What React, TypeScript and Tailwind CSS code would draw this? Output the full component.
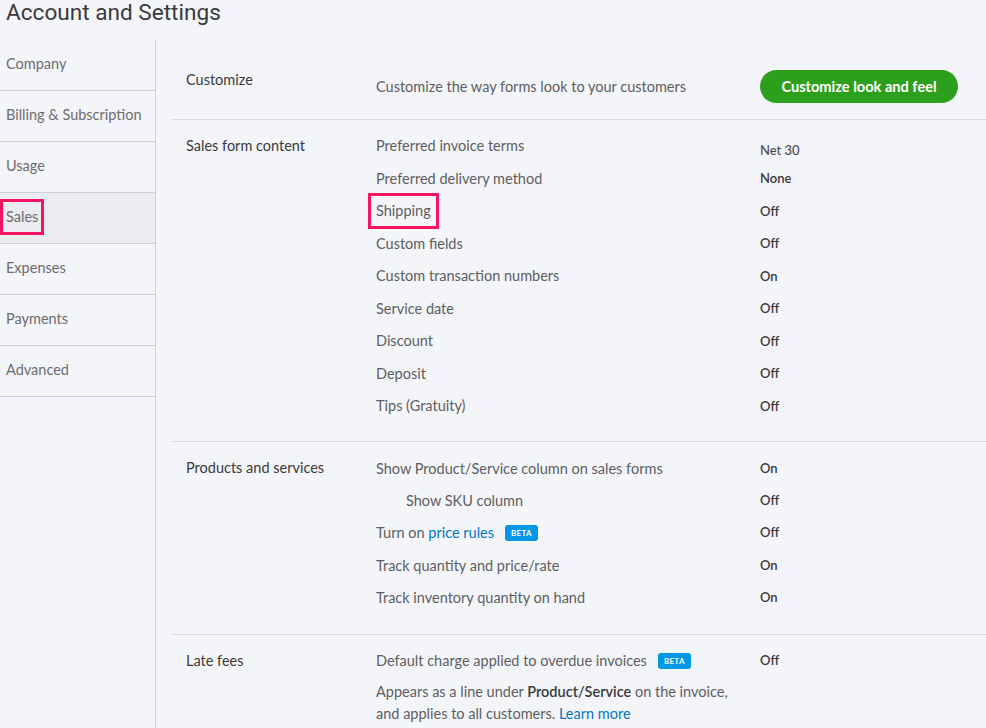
import React from "react";

const navItems = ["Company", "Billing & Subscription", "Usage", "Sales", "Expenses", "Payments", "Advanced"];

function Beta() {
  return (
    <span className="ml-[11px] inline-flex h-[16px] items-center rounded-[3px] bg-[#0097e6] px-[6px] text-[8px] font-bold leading-none tracking-[0.3px] text-white">
      BETA
    </span>
  );
}

function Row({
  label,
  value,
  valueClass,
  h = "h-[32.5px]",
}: {
  label: React.ReactNode;
  value: string;
  valueClass?: string;
  h?: string;
}) {
  return (
    <div className={`flex items-center ${h}`}>
      <div className="w-[384px] text-[14.5px] text-[#5d5e63]">{label}</div>
      <div className={valueClass ?? "text-[13px] font-semibold text-[#393a3d]"}>{value}</div>
    </div>
  );
}

function Section({ title, children, last }: { title: string; children: React.ReactNode; last?: boolean }) {
  return (
    <div className={`flex pl-[15px] ${last ? "" : "border-b border-[#dcdee2]"}`}>
      <div className="w-[190px] shrink-0 pt-[16px] text-[14.5px] leading-[20px] text-[#393a3d]">{title}</div>
      <div className="flex-1">{children}</div>
    </div>
  );
}

export default function App() {
  return (
    <div className="h-[728px] w-[986px] overflow-hidden bg-[#f4f5f8] font-['Lato',sans-serif]">
      <h1 className="h-[40px] pl-[6px] font-['Roboto',sans-serif] text-[22.6px] leading-[25px] text-[#393a3d]">
        Account and Settings
      </h1>
      <div className="flex h-[688px]">
        <nav className="w-[156px] shrink-0 border-r border-[#cfd1d5]">
          {navItems.map((item) => (
            <div
              key={item}
              className={`flex h-[51px] items-center border-b border-[#cfd1d5] pb-[2px] text-[14.5px] text-[#6b6c72] ${
                item === "Sales" ? "bg-[#ebecf0]" : ""
              }`}
            >
              {item === "Sales" ? (
                <span className="border-[3px] border-[#f5145f] px-[3px] py-[5px] leading-[20px]">Sales</span>
              ) : (
                <span className="pl-[6px]">{item}</span>
              )}
            </div>
          ))}
        </nav>

        <main className="flex-1">
          <div className="ml-[15px] flex flex-col">
            {/* Customize */}
            <div className="flex border-b border-[#dcdee2] pl-[15px]">
              <div className="w-[190px] shrink-0 pt-[30px] text-[14.5px] leading-[20px] text-[#393a3d]">Customize</div>
              <div className="flex flex-1 items-center pb-[16px] pt-[30px]">
                <div className="w-[384px] text-[14.5px] text-[#5d5e63]">Customize the way forms look to your customers</div>
                <button className="h-[33px] w-[198px] rounded-full bg-[#2ca01c] text-[14.6px] font-bold text-white">
                  Customize look and feel
                </button>
              </div>
            </div>

            <Section title="Sales form content">
              <div className="pb-[18px] pt-[10px]">
                <Row
                  label="Preferred invoice terms"
                  value="Net 30"
                  valueClass="pt-[8px] text-[13px] font-medium text-[#4a4b50]"
                />
                <Row label="Preferred delivery method" value="None" />
                <Row
                  label={
                    <span className="-ml-[8px] inline-block border-[3px] border-[#f5145f] px-[5px] py-[5px] leading-[20px]">
                      Shipping
                    </span>
                  }
                  value="Off"
                />
                <Row label="Custom fields" value="Off" />
                <Row label="Custom transaction numbers" value="On" />
                <Row label="Service date" value="Off" />
                <Row label="Discount" value="Off" />
                <Row label="Deposit" value="Off" />
                <Row label="Tips (Gratuity)" value="Off" />
              </div>
            </Section>

            <Section title="Products and services">
              <div className="pb-[20px] pt-[11px]">
                <Row h="h-[32.25px]" label="Show Product/Service column on sales forms" value="On" />
                <Row h="h-[32.25px]" label={<span className="pl-[30px]">Show SKU column</span>} value="Off" />
                <Row
                  h="h-[32.25px]"
                  label={
                    <span className="flex items-center">
                      Turn on&nbsp;<span className="text-[#0077c5]">price rules</span>
                      <Beta />
                    </span>
                  }
                  value="Off"
                />
                <Row h="h-[32.25px]" label="Track quantity and price/rate" value="On" />
                <Row h="h-[32.25px]" label="Track inventory quantity on hand" value="On" />
              </div>
            </Section>

            <Section title="Late fees" last>
              <div className="pt-[10px]">
                <Row
                  label={
                    <span className="flex items-center">
                      Default charge applied to overdue invoices
                      <Beta />
                    </span>
                  }
                  value="Off"
                />
                <p className="mt-[4px] w-[362px] text-[14.5px] leading-[22px] text-[#5d5e63]">
                  Appears as a line under <b className="font-semibold text-[#393a3d]">Product/Service</b> on the
                  invoice, and applies to all customers. <a className="text-[#0077c5]">Learn more</a>
                </p>
              </div>
            </Section>
          </div>
        </main>
      </div>
    </div>
  );
}
